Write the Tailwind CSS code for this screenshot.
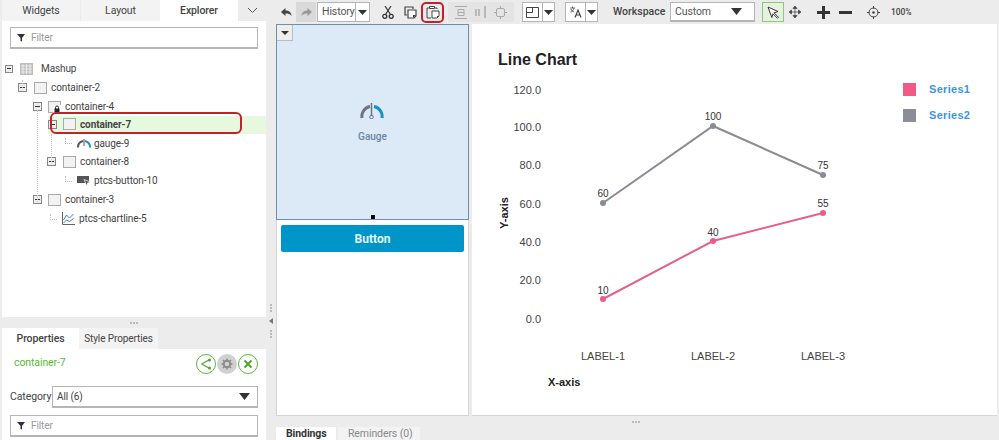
<!DOCTYPE html>
<html lang="en">
<head>
  <meta charset="UTF-8" />
  <title>Mashup Builder</title>
  <script src="https://cdn.jsdelivr.net/npm/@tailwindcss/browser@4"></script>
</head>
<body class="bg-[#ececec]">
  <div class="relative w-[999px] h-[440px] overflow-hidden flex font-['Roboto',sans-serif] text-[10px] tracking-[-0.1px] text-[#444]">

    <!-- left column -->
    <div class="w-[264px] ml-[2px] h-full flex flex-col">
      <div class="flex h-[21px] shrink-0 text-[10.500px]">
        <div class="w-[78px] bg-[#f3f3f3] flex items-center justify-center">Widgets</div>
        <div class="w-[79px] ml-[1px] bg-[#f3f3f3] flex items-center justify-center">Layout</div>
        <div class="w-[78px] bg-white font-medium flex items-center justify-center">Explorer</div>
        <div class="flex-1 flex items-center justify-center">
          <svg width="11" height="7" viewBox="0 0 11 7"><path d="M1 1l4.500 4.500L10 1" fill="none" stroke="#555" stroke-width="1"/></svg>
        </div>
      </div>

      <div class="relative h-[296px] shrink-0 bg-white">
        <div class="mt-[6px] mx-[8px] h-[22px] border border-[#b5b5b5] border-b-2 flex items-center pl-[6px] text-[#999]">
          <svg width="9" height="9" viewBox="0 0 9 9"><path d="M0 1h8L5 5v3.500L3.500 8V5z" fill="#333"/></svg>
          <span class="ml-[5px]">Filter</span>
        </div>

        <!-- tree guides -->
        <div class="absolute left-[35px] top-[89px] h-[92px] border-l border-dotted border-[#c4c4c4]"></div>
        <div class="absolute left-[49px] top-[113px] h-[28px] border-l border-dotted border-[#c4c4c4]"></div>
        <div class="absolute left-[20px] top-[59px] h-[8px] border-l border-dotted border-[#c4c4c4]"></div>

        <div class="mt-[10px]">
          <div class="h-[19px] flex items-center pl-[3px]">
            <div class="w-[8px] h-[8px] border border-[#888] bg-[#eee] flex items-center justify-center"><div class="w-[4px] h-[1px] bg-[#333]"></div></div>
            <svg class="ml-[7px]" width="13" height="12" viewBox="0 0 13 12"><rect width="13" height="12" fill="#bdbdbd"/><path d="M1 3h11M1 6h11M1 9h11M3 1v10M6.500 1v10M10 1v10" stroke="#ececec" stroke-width="1"/></svg>
            <span class="ml-[8px]">Mashup</span>
          </div>
          <div class="h-[19px] flex items-center pl-[16px]">
            <div class="w-[9px] h-[9px] border border-[#888] bg-[#eee] flex items-center justify-center"><div class="w-[5px] h-[1px] bg-[#333]"></div></div>
            <div class="ml-[7px] w-[13px] h-[12px] border border-[#aaa] bg-[#f2f2f2]"></div>
            <span class="ml-[4px]">container-2</span>
          </div>
          <div class="h-[19px] flex items-center pl-[31px]">
            <div class="w-[9px] h-[9px] border border-[#888] bg-[#eee] flex items-center justify-center"><div class="w-[5px] h-[1px] bg-[#333]"></div></div>
            <div class="relative ml-[6px] w-[13px] h-[12px] border border-[#aaa] bg-[#f2f2f2]">
              <svg class="absolute left-[4px] top-[3px]" width="8" height="8" viewBox="0 0 8 8"><rect x="0" y="0" width="8" height="8" fill="#fff"/><path d="M2.500 4V2.500a1.500 1.500 0 013 0V4" fill="none" stroke="#222"/><rect x="1.500" y="3.500" width="5" height="4" fill="#222"/></svg>
            </div>
            <span class="ml-[4px]">container-4</span>
          </div>
          <div class="h-[18px] flex items-center pb-[2px] ml-[46px] bg-[#e6f8de]">
            <div class="w-[9px] h-[9px] border border-[#888] bg-[#eee] flex items-center justify-center"><div class="w-[5px] h-[1px] bg-[#333]"></div></div>
            <div class="ml-[6px] w-[13px] h-[12px] border border-[#aaa] bg-[#f2f2f2]"></div>
            <span class="ml-[4px] font-bold">container-7</span>
          </div>
          <div class="h-[18px] flex items-center pl-[63px]">
            <div class="w-[7px] h-[6px] border-l border-b border-dotted border-[#bbb] -mt-[4px]"></div>
            <svg class="ml-[5px]" width="14" height="10" viewBox="0 0 14 10"><path d="M1 9.500A6.500 6.500 0 016 3" fill="none" stroke="#555" stroke-width="2"/><path d="M8 3A6.500 6.500 0 0113 9.500" fill="none" stroke="#1493c4" stroke-width="2"/><path d="M7 1v7" stroke="#555" stroke-width="1"/></svg>
            <span class="ml-[3px]">gauge-9</span>
          </div>
          <div class="h-[19px] flex items-center pl-[45px]">
            <div class="w-[9px] h-[9px] border border-[#888] bg-[#eee] flex items-center justify-center"><div class="w-[5px] h-[1px] bg-[#333]"></div></div>
            <div class="ml-[7px] w-[13px] h-[12px] border border-[#aaa] bg-[#f2f2f2]"></div>
            <span class="ml-[4px]">container-8</span>
          </div>
          <div class="h-[19px] flex items-center pl-[63px]">
            <div class="w-[7px] h-[6px] border-l border-b border-dotted border-[#bbb] -mt-[4px]"></div>
            <svg class="ml-[5px]" width="14" height="10" viewBox="0 0 14 10"><rect width="12" height="7" fill="#555"/><path d="M7 3.500l6.500 2.500-2.800 .9L9.800 10z" fill="#555" stroke="#fff" stroke-width=".7"/></svg>
            <span class="ml-[3px]">ptcs-button-10</span>
          </div>
          <div class="h-[19px] flex items-center pl-[31px]">
            <div class="w-[9px] h-[9px] border border-[#888] bg-[#eee] flex items-center justify-center"><div class="w-[5px] h-[1px] bg-[#333]"></div></div>
            <div class="ml-[6px] w-[13px] h-[12px] border border-[#aaa] bg-[#f2f2f2]"></div>
            <span class="ml-[4px]">container-3</span>
          </div>
          <div class="h-[19px] flex items-center pl-[48px]">
            <div class="w-[7px] h-[6px] border-l border-b border-dotted border-[#bbb] -mt-[4px]"></div>
            <svg class="ml-[5px]" width="13" height="13" viewBox="0 0 13 13"><path d="M.500 0v12.500H13" fill="none" stroke="#666"/><path d="M1.500 8l3-5 3 3 4-4M1.500 11l3-3 3 1.500 4-3" fill="none" stroke="#4b7fa8" stroke-width="1"/></svg>
            <span class="ml-[4px]">ptcs-chartline-5</span>
          </div>
        </div>
      </div>

      <div class="h-[11px] shrink-0 flex items-center justify-center gap-[1px]">
        <i class="w-[2px] h-[2px] bg-[#bbb]"></i><i class="w-[2px] h-[2px] bg-[#bbb]"></i><i class="w-[2px] h-[2px] bg-[#bbb]"></i>
      </div>

      <div class="flex h-[21px] shrink-0">
        <div class="w-[77px] bg-white font-medium text-[10.500px] flex items-center justify-center">Properties</div>
        <div class="w-[79px] bg-[#f3f3f3] flex items-center justify-center">Style Properties</div>
      </div>
      <div class="flex-1 bg-white">
        <div class="h-[37px] flex items-center pl-[12px] pr-[8px] text-[#5bb73b]">
          <span class="flex-1 -mt-[9px] text-[10.500px]">container-7</span>
          <div class="flex gap-[1px] -mt-[8px]">
            <div class="w-[20px] h-[20px] rounded-full border border-[#5bb73b] flex items-center justify-center">
              <svg width="12" height="12" viewBox="0 0 12 12"><path d="M1.500 6L9 2M1.500 6L9 10" stroke="#4aa82c" stroke-width="1.200" fill="none"/><circle cx="9.500" cy="2" r="1.500" fill="#4aa82c"/><circle cx="9.500" cy="10" r="1.500" fill="#4aa82c"/></svg>
            </div>
            <div class="w-[20px] h-[20px] rounded-full bg-[#d0d0d0] flex items-center justify-center">
              <svg width="12" height="12" viewBox="0 0 12 12"><circle cx="6" cy="6" r="3.300" fill="none" stroke="#8c8c8c" stroke-width="2"/><path d="M6 .500v2M6 9.500v2M.500 6h2M9.500 6h2M2 2l1.500 1.500M8.500 8.500L10 10M2 10l1.500-1.500M8.500 3.500L10 2" stroke="#8c8c8c" stroke-width="1.500"/></svg>
            </div>
            <div class="w-[20px] h-[20px] rounded-full border border-[#5bb73b] flex items-center justify-center">
              <svg width="10" height="10" viewBox="0 0 10 10"><path d="M1.500 1.500l7 7M8.500 1.500l-7 7" stroke="#4aa82c" stroke-width="2"/></svg>
            </div>
          </div>
        </div>
        <div class="h-[22px] flex items-center pl-[8px] pr-[8px]">
          <span class="w-[42px] shrink-0 text-[10.500px]">Category</span>
          <div class="flex-1 h-[22px] border border-[#b5b5b5] border-b-2 flex items-center pl-[4px] pr-[7px]">
            <span class="flex-1">All (6)</span>
            <svg width="11" height="7" viewBox="0 0 11 7"><path d="M0 0h11L5.500 7z" fill="#333"/></svg>
          </div>
        </div>
        <div class="mt-[7px] mx-[8px] h-[22px] border border-[#b5b5b5] border-b-2 flex items-center pl-[6px] text-[#999]">
          <svg width="9" height="9" viewBox="0 0 9 9"><path d="M0 1h8L5 5v3.500L3.500 8V5z" fill="#333"/></svg>
          <span class="ml-[5px]">Filter</span>
        </div>
      </div>
    </div>

    <!-- vertical splitter -->
    <div class="w-[10px] shrink-0 relative">
      <div class="absolute left-[3px] top-[304px] flex flex-col gap-[1px] items-center">
        <i class="w-[2px] h-[2px] bg-[#bbb]"></i><i class="w-[2px] h-[2px] bg-[#bbb]"></i><i class="w-[2px] h-[2px] bg-[#bbb]"></i>
        <svg class="my-[5px]" width="4" height="6" viewBox="0 0 4 6"><path d="M4 0v6L0 3z" fill="#777"/></svg>
        <i class="w-[2px] h-[2px] bg-[#bbb]"></i><i class="w-[2px] h-[2px] bg-[#bbb]"></i><i class="w-[2px] h-[2px] bg-[#bbb]"></i>
      </div>
    </div>

    <!-- right column -->
    <div class="flex-1 flex flex-col min-w-0">
      <!-- toolbar -->
      <div class="h-[24px] shrink-0 flex items-center">
        <div class="w-[20px] h-[20px] flex items-center justify-center">
          <svg width="11" height="9" viewBox="0 0 11 9"><path d="M0 4l4.500-4v2.500C8 2.500 10.500 4.500 10.500 8 9 6 7.500 5.500 4.500 5.500V8z" fill="#444"/></svg>
        </div>
        <div class="w-[20px] h-[20px] bg-[#d9d9d9] flex items-center justify-center">
          <svg width="11" height="9" viewBox="0 0 11 9"><path d="M11 4L6.500 0v2.500C3 2.500 .500 4.500 .500 8 2 6 3.500 5.500 6.500 5.500V8z" fill="#999"/></svg>
        </div>
        <div class="ml-[1px] w-[53px] h-[20px] bg-white border border-[#b5b5b5] flex items-center">
          <span class="flex-1 pl-[4px] text-[#555] text-[10.500px]">History</span>
          <div class="w-[14px] h-full border-l border-[#b5b5b5] flex items-center justify-center">
            <svg width="9" height="5" viewBox="0 0 9 5"><path d="M0 0h9L4.500 5z" fill="#333"/></svg>
          </div>
        </div>
        <svg class="ml-[12px]" width="12" height="13" viewBox="0 0 12 13"><path d="M3 0l5.500 8.500M9 0L3.500 8.500" stroke="#333" stroke-width="1.200"/><circle cx="2.800" cy="10.300" r="2" fill="none" stroke="#333" stroke-width="1.300"/><circle cx="9.200" cy="10.300" r="2" fill="none" stroke="#333" stroke-width="1.300"/></svg>
        <svg class="ml-[10px]" width="13" height="13" viewBox="0 0 13 13"><path d="M9 3V1H1v8h2" fill="none" stroke="#444" stroke-width="1.200"/><path d="M4 4h8v6l-2 2H4z" fill="#fff" stroke="#444" stroke-width="1.200"/><path d="M9 12V9h3z" fill="#444"/></svg>
        <div class="ml-[4px] w-[23px] h-[21px] rounded-[5px] border-2 border-[#c8202a] flex items-center justify-center">
          <svg width="14" height="14" viewBox="0 0 14 14"><path d="M3 3H1v10h4M9 3h2v1" fill="none" stroke="#444"/><path d="M3.500 1.500h5v2h-5z" fill="#fff" stroke="#444"/><path d="M6 6h7v5l-2 2H6z" fill="#fff" stroke="#444"/><path d="M11 13v-2h2z" fill="#444"/></svg>
        </div>
        <div class="ml-[4px] w-[66px] h-[20px] bg-[#e4e4e4] flex items-center justify-around px-[3px]">
          <svg width="12" height="13" viewBox="0 0 12 13"><path d="M0 .500h12M0 12.500h12" stroke="#aaa"/><path d="M3 3.500h6v6H3z" fill="none" stroke="#aaa"/><path d="M3 6.500h6" stroke="#aaa"/></svg>
          <svg width="11" height="12" viewBox="0 0 11 12"><path d="M1 3v7M4 3v7M10 0v12" stroke="#aaa" stroke-width="1.500"/></svg>
          <svg width="13" height="13" viewBox="0 0 13 13"><rect x="2.500" y="2.500" width="8" height="8" rx="1.500" fill="none" stroke="#aaa"/><path d="M6.500 0v3M6.500 10v3M0 6.500h3M10 6.500h3" stroke="#aaa"/></svg>
        </div>
        <div class="ml-[8px] w-[33px] h-[20px] bg-white border border-[#b5b5b5] flex items-center">
          <div class="w-[19px] flex items-center justify-center">
            <svg width="13" height="11" viewBox="0 0 13 11"><path d="M.500 .500h12v10H.500zM.500 5.500h6v-5" fill="none" stroke="#444"/></svg>
          </div>
          <div class="flex-1 h-full border-l border-[#b5b5b5] flex items-center justify-center">
            <svg width="9" height="5" viewBox="0 0 9 5"><path d="M0 0h9L4.500 5z" fill="#333"/></svg>
          </div>
        </div>
        <div class="ml-[10px] w-[33px] h-[20px] bg-white border border-[#b5b5b5] flex items-center">
          <div class="w-[19px] flex items-center justify-center">
            <svg width="13" height="12" viewBox="0 0 13 12"><path d="M1 2h5M3.500 .500V2M1.500 6c2 0 3-2 3.500-4M2 3c.500 1.500 1.500 2.500 3 3" fill="none" stroke="#444" stroke-width=".8"/><path d="M6 11.500L9 4l3 7.500M7.200 9h3.600" fill="none" stroke="#444" stroke-width="1.200"/></svg>
          </div>
          <div class="flex-1 h-full border-l border-[#b5b5b5] flex items-center justify-center">
            <svg width="9" height="5" viewBox="0 0 9 5"><path d="M0 0h9L4.500 5z" fill="#333"/></svg>
          </div>
        </div>
        <span class="ml-[15px] w-[52px] font-medium text-[10.500px] tracking-normal">Workspace</span>
        <div class="ml-[5px] w-[85px] h-[20px] bg-white border border-[#b5b5b5] border-b-2 flex items-center pl-[4px] pr-[12px]">
          <span class="flex-1 text-[#555] text-[10.500px]">Custom</span>
          <svg width="11" height="7" viewBox="0 0 11 7"><path d="M0 0h11L5.500 7z" fill="#333"/></svg>
        </div>
        <div class="ml-[7px] w-[22px] h-[20px] bg-[#e6f2e0] border border-[#8cc878] flex items-center justify-center">
          <svg width="13" height="13" viewBox="0 0 13 13"><path d="M1 1l10 4.500-4 1.300 4.500 4.500-1 1L6 7.800 4.800 11.500z" fill="#fff" stroke="#333"/></svg>
        </div>
        <svg class="ml-[5px]" width="12" height="12" viewBox="0 0 12 12"><path d="M6 0l2 2.500H4zM6 12l2-2.500H4zM0 6l2.500-2v4zM12 6L9.500 4v4zM6 2v8M2 6h8" fill="#444" stroke="#444" stroke-width=".7"/></svg>
        <svg class="ml-[16px]" width="13" height="13" viewBox="0 0 13 13"><path d="M6.500 0v13M0 6.500h13" stroke="#333" stroke-width="3"/></svg>
        <svg class="ml-[9px]" width="13" height="3" viewBox="0 0 13 3"><path d="M0 1.500h13" stroke="#333" stroke-width="3"/></svg>
        <svg class="ml-[15px]" width="13" height="13" viewBox="0 0 13 13"><circle cx="6.500" cy="6.500" r="4.500" fill="none" stroke="#444"/><circle cx="6.500" cy="6.500" r="1.300" fill="#444"/><path d="M6.500 0v2.500M6.500 10.500V13M0 6.500h2.500M10.500 6.500H13" stroke="#444"/></svg>
        <span class="ml-[11px] text-[8.500px] font-medium">100%</span>
      </div>

      <!-- canvas -->
      <div class="h-[392px] shrink-0 flex pr-[2px]">
        <div class="w-[193px] bg-white border-x border-b border-[#d4d4d4] flex flex-col">
          <div class="relative h-[196px] -mx-[1px] bg-[#dce9f7] border border-[#6f8fb0] flex flex-col items-center pt-[77px]">
            <div class="absolute left-0 top-0 w-[16px] h-[16px] bg-[#eee] border-r border-b border-[#bbb] flex items-center justify-center">
              <svg width="8" height="4" viewBox="0 0 8 4"><path d="M0 0h8L4 4z" fill="#333"/></svg>
            </div>
            <svg class="-ml-[2px]" width="24" height="17" viewBox="0 0 24 17"><path d="M2 16A10 10 0 0110 4.500" fill="none" stroke="#6e7480" stroke-width="3"/><path d="M14 4.500A10 10 0 0122 16" fill="none" stroke="#1493c4" stroke-width="3"/><path d="M11.500 1v13" stroke="#6e7480" stroke-width="1.500"/><circle cx="11.500" cy="15" r="1.800" fill="none" stroke="#6e7480"/></svg>
            <span class="mt-[10px] text-[10px] tracking-normal font-medium text-[#6a85a5]">Gauge</span>
            <div class="absolute left-[94px] bottom-0 w-[4px] h-[4px] bg-black"></div>
          </div>
          <div class="mt-[5px] mx-[4px] h-[27px] bg-[#0095c8] rounded-[2px] flex items-center justify-center text-[12px] tracking-normal font-bold text-[#e4f6ff]">Button</div>
        </div>

        <div class="ml-[3px] flex-1 bg-white border-b border-[#d4d4d4]">
          <svg class="block font-['Liberation_Sans',sans-serif] tracking-normal" width="525" height="391" viewBox="472 24 525 391">
            <text x="498" y="65" font-size="16" font-weight="700" fill="#222">Line Chart</text>

            <g font-size="11" fill="#444" text-anchor="end">
              <text x="541" y="94">120.0</text>
              <text x="541" y="131">100.0</text>
              <text x="541" y="169">80.0</text>
              <text x="541" y="208">60.0</text>
              <text x="541" y="246">40.0</text>
              <text x="541" y="284">20.0</text>
              <text x="541" y="323">0.0</text>
            </g>
            <text transform="translate(508 213) rotate(-90)" font-size="11" font-weight="700" fill="#222" text-anchor="middle">Y-axis</text>

            <g font-size="11" fill="#444" text-anchor="middle">
              <text x="603" y="360">LABEL-1</text>
              <text x="713" y="360">LABEL-2</text>
              <text x="823" y="360">LABEL-3</text>
            </g>
            <text x="548" y="386" font-size="11" font-weight="700" fill="#222">X-axis</text>

            <polyline points="603,203 713,126 823,175" fill="none" stroke="#8b8b93" stroke-width="2"/>
            <g fill="#8b8b93"><circle cx="603" cy="203" r="3"/><circle cx="713" cy="126" r="3"/><circle cx="823" cy="175" r="3"/></g>
            <polyline points="603,299 713,241 823,213" fill="none" stroke="#e5608a" stroke-width="2"/>
            <g fill="#ec5c86"><circle cx="603" cy="299" r="3"/><circle cx="713" cy="241" r="3"/><circle cx="823" cy="213" r="3"/></g>

            <g font-size="10" fill="#333" text-anchor="middle">
              <text x="603" y="197">60</text>
              <text x="713" y="120">100</text>
              <text x="823" y="169">75</text>
              <text x="603" y="294">10</text>
              <text x="713" y="236">40</text>
              <text x="823" y="207">55</text>
            </g>

            <rect x="903" y="83" width="13" height="13" fill="#f05a84"/>
            <rect x="903" y="109" width="13" height="13" fill="#8b8d98"/>
            <g font-size="11" font-weight="700" fill="#3b93ee" letter-spacing=".3">
              <text x="929" y="93">Series1</text>
              <text x="929" y="119">Series2</text>
            </g>
          </svg>
        </div>
      </div>

      <!-- bottom -->
      <div class="h-[11px] shrink-0 flex items-center justify-center gap-[1px] pr-[4px]">
        <i class="w-[2px] h-[2px] bg-[#bbb]"></i><i class="w-[2px] h-[2px] bg-[#bbb]"></i><i class="w-[2px] h-[2px] bg-[#bbb]"></i>
      </div>
      <div class="flex-1 flex gap-[2px]">
        <div class="w-[60px] bg-white font-bold text-[10.500px] leading-[12px] text-[#333] pl-[10px] pt-[1px]">Bindings</div>
        <div class="w-[82px] bg-[#f3f3f3] text-[10.500px] leading-[12px] text-[#888] pl-[10px] pt-[1px]">Reminders (0)</div>
      </div>
    </div>

    <!-- selection callout -->
    <div class="absolute left-[50px] top-[112px] w-[192px] h-[22px] rounded-[6px] border-2 border-[#c8202a]"></div>
  </div>
</body>
</html>
